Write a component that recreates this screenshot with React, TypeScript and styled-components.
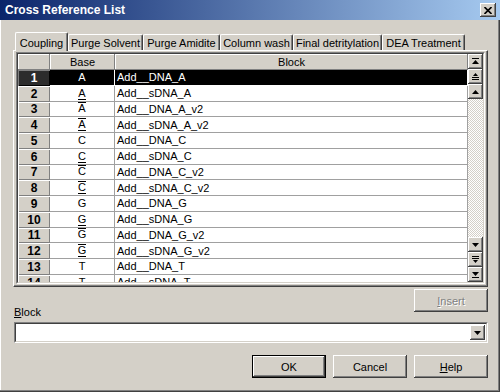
import React from "react";
import styled, { createGlobalStyle, css } from "styled-components";

const GlobalStyle = createGlobalStyle`
  html, body {
    margin: 0;
    padding: 0;
    background: #d4d0c8;
  }
  body {
    font-family: "Liberation Sans", Arial, sans-serif;
    font-size: 11px;
    color: #000;
  }
`;

const raised = css`
  background: #d4d0c8;
  box-shadow: inset -1px -1px #404040, inset 1px 1px #fff, inset -2px -2px #808080;
`;

const Window = styled.div`
  width: 500px;
  height: 392px;
  display: flex;
  flex-direction: column;
  background: #d4d0c8;
  overflow: hidden;
`;

const TitleBar = styled.div`
  height: 20px;
  flex: none;
  display: flex;
  align-items: center;
  justify-content: space-between;
  padding: 0 4px 0 5px;
  background: linear-gradient(to right, #0a246a, #a6caf0);
  color: #fff;
  font-weight: bold;
  font-size: 12px;
`;

const CloseButton = styled.div`
  ${raised};
  width: 16px;
  height: 14px;
  display: flex;
  align-items: center;
  justify-content: center;
`;

const Body = styled.div`
  flex: 1;
  display: flex;
  flex-direction: column;
  padding: 12px 12px 0 13px;
  box-shadow: inset -1px -1px #404040, inset -2px -2px #808080, inset 1px 0 #fff;
`;

const TabStrip = styled.div`
  display: flex;
  align-items: flex-end;
  height: 18px;
  padding-left: 2px;
  position: relative;
  z-index: 1;
`;

const Tab = styled.div<{ $w: number; $active?: boolean }>`
  width: ${(p) => p.$w}px;
  box-sizing: border-box;
  height: ${(p) => (p.$active ? 19 : 16)}px;
  margin-bottom: ${(p) => (p.$active ? -1 : 0)}px;
  padding-top: ${(p) => (p.$active ? 4 : 2)}px;
  line-height: 13px;
  text-align: center;
  white-space: nowrap;
  background: #d4d0c8;
  border-top: 1px solid #fff;
  border-left: 1px solid #fff;
  border-right: 1px solid #404040;
  border-radius: 2px 2px 0 0;
  box-shadow: inset -1px 0 #808080;
`;

const Panel = styled.div`
  flex: none;
  height: 237px;
  box-sizing: border-box;
  border-top: 1px solid #fff;
  border-left: 1px solid #fff;
  border-right: 1px solid #404040;
  border-bottom: 1px solid #404040;
  box-shadow: inset -1px -1px #808080;
  padding: 1px 2px 2px 2px;
`;

const Grid = styled.div`
  height: 100%;
  box-sizing: border-box;
  border-top: 1px solid #808080;
  border-left: 1px solid #808080;
  border-right: 1px solid #fff;
  border-bottom: 1px solid #fff;
  display: flex;
`;

const GridInner = styled.div`
  flex: 1;
  display: flex;
  border-top: 1px solid #404040;
  border-left: 1px solid #404040;
  border-right: 1px solid #d4d0c8;
  border-bottom: 1px solid #d4d0c8;
  background: #fff;
  overflow: hidden;
`;

const Table = styled.div`
  flex: 1;
  overflow: hidden;
  display: flex;
  flex-direction: column;
`;

const Row = styled.div<{ $header?: boolean; $selected?: boolean }>`
  display: flex;
  flex: none;
  height: ${(p) => (p.$header ? "16px" : "15.75px")};
  background: ${(p) => (p.$selected ? "#000" : "#fff")};
  color: ${(p) => (p.$selected ? "#fff" : "#000")};
`;

const HeadCell = styled.div<{ $w?: number }>`
  ${raised};
  box-shadow: inset -1px -1px #808080, inset 1px 1px #fff;
  width: ${(p) => (p.$w ? `${p.$w}px` : "auto")};
  flex: ${(p) => (p.$w ? "none" : "1")};
  display: flex;
  align-items: center;
  justify-content: center;
`;

const NumCell = styled.div<{ $selected?: boolean }>`
  width: 32px;
  flex: none;
  display: flex;
  align-items: center;
  justify-content: center;
  font-weight: bold;
  font-size: 12px;
  background: ${(p) => (p.$selected ? "#2c2c2c" : "#d4d0c8")};
  color: ${(p) => (p.$selected ? "#fff" : "#000")};
  box-shadow: ${(p) =>
    p.$selected
      ? "inset 1px 1px #808080, inset -1px -1px #000"
      : "inset 1px 1px #fff, inset -1px -1px #808080"};
`;

const Cell = styled.div<{ $w?: number; $center?: boolean; $selected?: boolean }>`
  width: ${(p) => (p.$w ? `${p.$w}px` : "auto")};
  flex: ${(p) => (p.$w ? "none" : "1")};
  box-sizing: border-box;
  display: flex;
  align-items: center;
  justify-content: ${(p) => (p.$center ? "center" : "flex-start")};
  padding-left: ${(p) => (p.$center ? 0 : 2)}px;
  white-space: nowrap;
  border-bottom: 1px solid ${(p) => (p.$selected ? "#fff" : "#a0a0a0")};
  border-right: 1px solid ${(p) => (p.$selected ? "#fff" : "#a0a0a0")};
`;

const Mark = styled.span<{ $over?: boolean; $under?: boolean }>`
  display: inline-block;
  line-height: 8px;
  padding: 1px 0 2px;
  border-top: 1px solid ${(p) => (p.$over ? "currentColor" : "transparent")};
  border-bottom: 1px solid ${(p) => (p.$under ? "currentColor" : "transparent")};
`;

const ScrollBar = styled.div`
  width: 15px;
  flex: none;
  display: flex;
  flex-direction: column;
`;

const ScrollButton = styled.div`
  ${raised};
  height: 15px;
  flex: none;
  display: flex;
  align-items: center;
  justify-content: center;
`;

const Track = styled.div`
  flex: 1;
  background: repeating-conic-gradient(#d4d0c8 0 25%, #fff 0 50%) 0 0 / 2px 2px;
`;

const Footer = styled.div`
  display: flex;
  flex-direction: column;
  padding: 2px 0 0 1px;
`;

const LabelRow = styled.div`
  display: flex;
  justify-content: space-between;
  align-items: flex-start;
`;

const Label = styled.div`
  margin-top: 17px;
  line-height: 13px;
`;

const Button = styled.button<{ $default?: boolean }>`
  ${raised};
  width: 74px;
  height: 23px;
  border: ${(p) => (p.$default ? "1px solid #000" : "none")};
  padding: 0;
  font: inherit;
  color: #000;
  &:disabled {
    color: #808080;
    text-shadow: 1px 1px #fff;
  }
`;

const Combo = styled.div`
  margin-top: 3px;
  height: 21px;
  box-sizing: border-box;
  border-top: 1px solid #808080;
  border-left: 1px solid #808080;
  border-right: 1px solid #fff;
  border-bottom: 1px solid #fff;
  display: flex;
`;

const ComboInner = styled.div`
  flex: 1;
  background: #fff;
  border-top: 1px solid #404040;
  border-left: 1px solid #404040;
  border-right: 1px solid #d4d0c8;
  border-bottom: 1px solid #d4d0c8;
  display: flex;
  justify-content: flex-end;
  align-items: center;
  padding-right: 1px;
`;

const DropButton = styled.div`
  ${raised};
  width: 15px;
  height: 15px;
  display: flex;
  align-items: center;
  justify-content: center;
`;

const ButtonRow = styled.div`
  display: flex;
  justify-content: flex-end;
  gap: 7px;
  margin-top: 12px;
`;

type Icon = "top" | "pageUp" | "up" | "down" | "pageDown" | "bottom";

const ArrowIcon = ({ kind }: { kind: Icon }) => (
  <svg width="7" height="8" viewBox="0 0 7 8" shapeRendering="crispEdges">
    {kind === "top" && (
      <>
        <rect x="0" y="0" width="7" height="1" />
        <polygon points="3.5,2 7,6 0,6" shapeRendering="auto" />
      </>
    )}
    {kind === "pageUp" && (
      <>
        <polygon points="3.5,0 6,3 1,3" shapeRendering="auto" />
        <rect x="0" y="4" width="7" height="1" />
        <rect x="0" y="6" width="7" height="1" />
      </>
    )}
    {kind === "up" && <polygon points="3.5,2 7,6 0,6" shapeRendering="auto" />}
    {kind === "down" && <polygon points="0,2 7,2 3.5,6" shapeRendering="auto" />}
    {kind === "pageDown" && (
      <>
        <rect x="0" y="0" width="7" height="1" />
        <rect x="0" y="2" width="7" height="1" />
        <polygon points="1,4 6,4 3.5,7" shapeRendering="auto" />
      </>
    )}
    {kind === "bottom" && (
      <>
        <polygon points="0,1 7,1 3.5,5" shapeRendering="auto" />
        <rect x="0" y="6" width="7" height="1" />
      </>
    )}
  </svg>
);

const tabs = [
  { label: "Coupling", w: 53 },
  { label: "Purge Solvent", w: 75 },
  { label: "Purge Amidite", w: 77 },
  { label: "Column wash", w: 73 },
  { label: "Final detritylation", w: 89 },
  { label: "DEA Treatment", w: 83 },
];

const bases = ["A", "C", "G", "T"];
const rows = Array.from({ length: 16 }, (_, i) => {
  const base = bases[Math.floor(i / 4)];
  const v = i % 4;
  return {
    n: i + 1,
    base,
    over: v >= 2,
    under: v === 1 || v === 3,
    block: `Add__${v % 2 ? "s" : ""}DNA_${base}${v >= 2 ? "_v2" : ""}`,
  };
});

export default function App() {
  return (
    <Window>
      <GlobalStyle />
      <TitleBar>
        <span>Cross Reference List</span>
        <CloseButton>
          <svg width="8" height="7" viewBox="0 0 8 7">
            <path d="M0.5 0 L7.5 7 M7.5 0 L0.5 7" stroke="#000" strokeWidth="1.6" />
          </svg>
        </CloseButton>
      </TitleBar>
      <Body>
        <TabStrip>
          {tabs.map((t, i) => (
            <Tab key={t.label} $w={t.w} $active={i === 0}>
              {t.label}
            </Tab>
          ))}
        </TabStrip>
        <Panel>
          <Grid>
            <GridInner>
              <Table>
                <Row $header>
                  <HeadCell $w={32} />
                  <HeadCell $w={65}>Base</HeadCell>
                  <HeadCell>Block</HeadCell>
                </Row>
                {rows.map((r, i) => (
                  <Row key={r.n} $selected={i === 0}>
                    <NumCell $selected={i === 0}>{r.n}</NumCell>
                    <Cell $w={65} $center $selected={i === 0}>
                      <Mark $over={r.over} $under={r.under}>
                        {r.base}
                      </Mark>
                    </Cell>
                    <Cell $selected={i === 0}>{r.block}</Cell>
                  </Row>
                ))}
              </Table>
              <ScrollBar>
                <ScrollButton>
                  <ArrowIcon kind="top" />
                </ScrollButton>
                <ScrollButton>
                  <ArrowIcon kind="pageUp" />
                </ScrollButton>
                <ScrollButton>
                  <ArrowIcon kind="up" />
                </ScrollButton>
                <Track />
                <ScrollButton>
                  <ArrowIcon kind="down" />
                </ScrollButton>
                <ScrollButton>
                  <ArrowIcon kind="pageDown" />
                </ScrollButton>
                <ScrollButton>
                  <ArrowIcon kind="bottom" />
                </ScrollButton>
              </ScrollBar>
            </GridInner>
          </Grid>
        </Panel>
        <Footer>
          <LabelRow>
            <Label>
              <u>B</u>lock
            </Label>
            <Button disabled>
              <u>I</u>nsert
            </Button>
          </LabelRow>
          <Combo>
            <ComboInner>
              <DropButton>
                <ArrowIcon kind="down" />
              </DropButton>
            </ComboInner>
          </Combo>
          <ButtonRow>
            <Button $default>OK</Button>
            <Button>Cancel</Button>
            <Button>
              <u>H</u>elp
            </Button>
          </ButtonRow>
        </Footer>
      </Body>
    </Window>
  );
}
